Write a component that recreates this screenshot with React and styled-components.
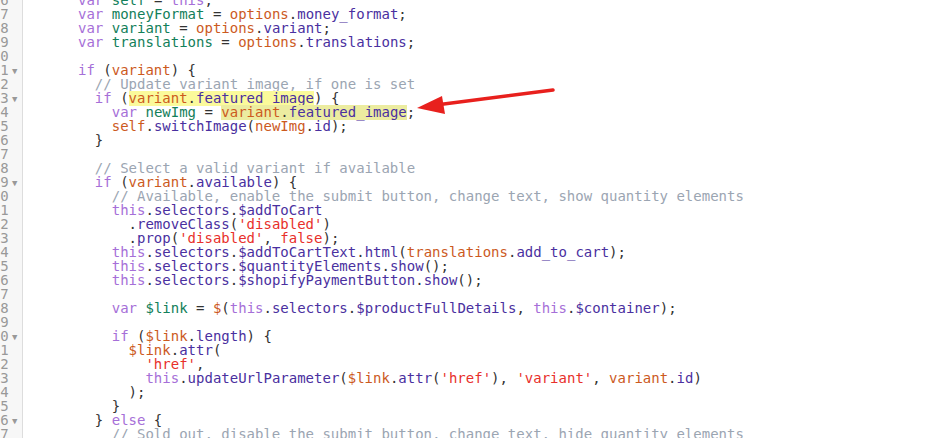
import React from 'react';
import styled, { createGlobalStyle } from 'styled-components';

const GlobalStyle = createGlobalStyle`
  html, body {
    margin: 0;
    padding: 0;
    background: #fff;
    overflow: hidden;
  }
`;

const COLORS = {
  kw: '#a66fd8',
  def: '#13805a',
  vr: '#cc5a1e',
  prop: '#4a30a0',
  str: '#e8302b',
  com: '#9ba5b2',
  atom: '#e8302b',
  p: '#333',
};

// token helpers
const k = (t) => ['kw', t];
const d = (t) => ['def', t];
const v = (t) => ['vr', t];
const pr = (t) => ['prop', t];
const s = (t) => ['str', t];
const c = (t) => ['com', t];
const p = (t) => ['p', t];

const lines = [
  { n: 6, i: 0, t: [k('var'), p(' '), d('self'), p(' = '), k('this'), p(';')] },
  { n: 7, i: 0, t: [k('var'), p(' '), d('moneyFormat'), p(' = '), v('options'), p('.'), pr('money_format'), p(';')] },
  { n: 8, i: 0, t: [k('var'), p(' '), d('variant'), p(' = '), v('options'), p('.'), pr('variant'), p(';')] },
  { n: 9, i: 0, t: [k('var'), p(' '), d('translations'), p(' = '), v('options'), p('.'), pr('translations'), p(';')] },
  { n: 10, i: 0, t: [] },
  { n: 11, i: 0, fold: true, t: [k('if'), p(' ('), v('variant'), p(') {')] },
  { n: 12, i: 2, t: [c('// Update variant image, if one is set')] },
  { n: 13, i: 2, fold: true, t: [k('if'), p(' ('), ['hl1', [v('variant'), p('.'), pr('featured_image')]], p(') {')] },
  { n: 14, i: 4, t: [k('var'), p(' '), d('newImg'), p(' = '), ['hl2', [v('variant'), p('.'), pr('featured_image')]], p(';')] },
  { n: 15, i: 4, t: [v('self'), p('.'), pr('switchImage'), p('('), v('newImg'), p('.'), pr('id'), p(');')] },
  { n: 16, i: 2, t: [p('}')] },
  { n: 17, i: 0, t: [] },
  { n: 18, i: 2, t: [c('// Select a valid variant if available')] },
  { n: 19, i: 2, fold: true, t: [k('if'), p(' ('), v('variant'), p('.'), pr('available'), p(') {')] },
  { n: 20, i: 4, t: [c('// Available, enable the submit button, change text, show quantity elements')] },
  { n: 21, i: 4, t: [k('this'), p('.'), pr('selectors'), p('.'), pr('$addToCart')] },
  { n: 22, i: 6, t: [p('.'), pr('removeClass'), p('('), s("'disabled'"), p(')')] },
  { n: 23, i: 6, t: [p('.'), pr('prop'), p('('), s("'disabled'"), p(', '), ['atom', 'false'], p(');')] },
  { n: 24, i: 4, t: [k('this'), p('.'), pr('selectors'), p('.'), pr('$addToCartText'), p('.'), pr('html'), p('('), v('translations'), p('.'), pr('add_to_cart'), p(');')] },
  { n: 25, i: 4, t: [k('this'), p('.'), pr('selectors'), p('.'), pr('$quantityElements'), p('.'), pr('show'), p('();')] },
  { n: 26, i: 4, t: [k('this'), p('.'), pr('selectors'), p('.'), pr('$shopifyPaymentButton'), p('.'), pr('show'), p('();')] },
  { n: 27, i: 0, t: [] },
  { n: 28, i: 4, t: [k('var'), p(' '), d('$link'), p(' = '), v('$'), p('('), k('this'), p('.'), pr('selectors'), p('.'), pr('$productFullDetails'), p(', '), k('this'), p('.'), pr('$container'), p(');')] },
  { n: 29, i: 0, t: [] },
  { n: 30, i: 4, fold: true, t: [k('if'), p(' ('), v('$link'), p('.'), pr('length'), p(') {')] },
  { n: 31, i: 6, t: [v('$link'), p('.'), pr('attr'), p('(')] },
  { n: 32, i: 8, t: [s("'href'"), p(',')] },
  { n: 33, i: 8, t: [k('this'), p('.'), pr('updateUrlParameter'), p('('), v('$link'), p('.'), pr('attr'), p('('), s("'href'"), p('), '), s("'variant'"), p(', '), v('variant'), p('.'), pr('id'), p(')')] },
  { n: 34, i: 6, t: [p(');')] },
  { n: 35, i: 4, t: [p('}')] },
  { n: 36, i: 2, fold: true, t: [p('} '), k('else'), p(' {')] },
  { n: 37, i: 4, t: [c('// Sold out, disable the submit button, change text, hide quantity elements')] },
];

const Page = styled.div`
  position: relative;
  width: 929px;
  height: 438px;
  overflow: hidden;
  font-family: "DejaVu Sans Mono", "Liberation Mono", monospace;
  font-size: 14px;
`;

const Editor = styled.div`
  display: flex;
  flex-direction: column;
  margin-top: -7px;
`;

const Row = styled.div`
  display: flex;
  height: 14px;
  line-height: 14px;
`;

const Gutter = styled.div`
  display: flex;
  width: 22px;
  flex-shrink: 0;
  background: #f7f7f7;
  border-right: 1px solid #dddddd;
  color: #999;
`;

const LineNo = styled.div`
  width: 9px;
  text-align: right;
  white-space: nowrap;
`;

const Fold = styled.div`
  width: 13px;
  font-size: 9px;
  line-height: 16px;
  color: #999;
  text-align: center;
  padding-right: 1px;
`;

const Code = styled.div`
  padding-left: ${(props) => 55 + props.$indent * 8.43}px;
  white-space: pre;
  color: #333;
`;

const Tok = styled.span`
  color: ${(props) => COLORS[props.$kind]};
`;

const Mark = styled.span`
  background: ${(props) => (props.$strong ? '#fbfa9b' : '#ececa0')};
  display: inline-block;
  height: 15px;
`;

const ArrowLayer = styled.svg`
  position: absolute;
  left: 0;
  top: 0;
  pointer-events: none;
`;

function renderTokens(tokens) {
  return tokens.map(([kind, text], idx) => {
    if (kind === 'hl1' || kind === 'hl2') {
      return (
        <Mark key={idx} $strong={kind === 'hl1'}>
          {renderTokens(text)}
        </Mark>
      );
    }
    return (
      <Tok key={idx} $kind={kind}>
        {text}
      </Tok>
    );
  });
}

export default function App() {
  return (
    <Page>
      <GlobalStyle />
      <Editor>
        {lines.map((line) => (
          <Row key={line.n}>
            <Gutter>
              <LineNo>{line.n % 10}</LineNo>
              <Fold>{line.fold ? '▼' : ''}</Fold>
            </Gutter>
            <Code $indent={line.i}>{renderTokens(line.t)}</Code>
          </Row>
        ))}
      </Editor>
      <ArrowLayer width="929" height="438" viewBox="0 0 929 438">
        <line x1="553" y1="90" x2="436" y2="105" stroke="#e8201d" strokeWidth="3.5" strokeLinecap="round" />
        <polygon points="417,108 442,96 445,114" fill="#e8201d" />
      </ArrowLayer>
    </Page>
  );
}
